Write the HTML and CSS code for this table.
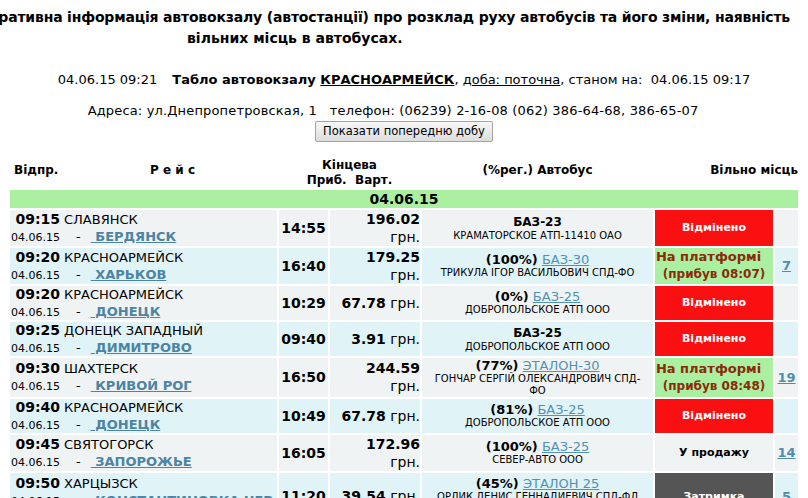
FILE: index.html
```html
<!DOCTYPE html>
<html lang="uk">
<head>
<meta charset="utf-8">
<title>Табло автовокзалу</title>
<link rel="stylesheet" href="styles.css">
</head>
<body>
<div class="title">
  <div class="t1"><span>Оперативна інформація автовокзалу (автостанції) про розклад руху автобусів та його зміни, наявність</span></div>
  <div class="t2">вільних місць в автобусах.</div>
</div>
<div class="info">04.06.15 09:21<span class="gap"></span><b>Табло автовокзалу <u>КРАСНОАРМЕЙСК</u></b>, <u>доба: поточна</u>, станом на:&nbsp; 04.06.15 09:17</div>
<div class="addr">Адреса: ул.Днепропетровская, 1&nbsp;&nbsp; телефон: (06239) 2-16-08 (062) 386-64-68, 386-65-07</div>
<div class="btnrow"><button class="btn">Показати попередню добу</button></div>

<table class="board">
  <colgroup>
    <col class="c-dep"><col class="c-arr"><col class="c-price"><col class="c-bus"><col class="c-st"><col class="c-free">
  </colgroup>
  <thead>
    <tr>
      <th class="h-dep"><div class="hd"><span class="h-otp">Відпр.</span><span class="h-reis">Р е й с</span></div></th>
      <th colspan="2" class="h-end">Кінцева<br>Приб.&nbsp; Варт.</th>
      <th>(%рег.) Автобус</th>
      <th colspan="2" class="h-free">Вільно місць</th>
    </tr>
  </thead>
  <tbody>
    <tr class="day"><td colspan="6">04.06.15</td></tr>

    <tr class="odd">
      <td class="dep"><div class="dl"><b class="t">09:15</b><span class="from">СЛАВЯНСК</span></div><div class="dl"><span class="d">04.06.15</span><span class="dash">-</span><a class="to" href="#">&nbsp;БЕРДЯНСК</a></div></td>
      <td class="arr">14:55</td>
      <td class="price"><b>196.02</b><br>грн.</td>
      <td class="bus"><div class="l1"><b class="model">БАЗ-23</b></div><div class="own">КРАМАТОРСКОЕ АТП-11410 ОАО</div></td>
      <td class="st cancel">Відмінено</td>
      <td class="free"></td>
    </tr>

    <tr class="even">
      <td class="dep"><div class="dl"><b class="t">09:20</b><span class="from">КРАСНОАРМЕЙСК</span></div><div class="dl"><span class="d">04.06.15</span><span class="dash">-</span><a class="to" href="#">&nbsp;ХАРЬКОВ</a></div></td>
      <td class="arr">16:40</td>
      <td class="price"><b>179.25</b><br>грн.</td>
      <td class="bus"><div class="l1"><b class="pct">(100%)</b> <a href="#">БАЗ-30</a></div><div class="own">ТРИКУЛА ІГОР ВАСИЛЬОВИЧ СПД-ФО</div></td>
      <td class="st plat"><span class="pl">На платформі</span><br><span class="arrived">(прибув 08:07)</span></td>
      <td class="free"><a href="#">7</a></td>
    </tr>

    <tr class="odd">
      <td class="dep"><div class="dl"><b class="t">09:20</b><span class="from">КРАСНОАРМЕЙСК</span></div><div class="dl"><span class="d">04.06.15</span><span class="dash">-</span><a class="to" href="#">&nbsp;ДОНЕЦК</a></div></td>
      <td class="arr">10:29</td>
      <td class="price nw"><b>67.78</b> грн.</td>
      <td class="bus"><div class="l1"><b class="pct">(0%)</b> <a href="#">БАЗ-25</a></div><div class="own">ДОБРОПОЛЬСКОЕ АТП ООО</div></td>
      <td class="st cancel">Відмінено</td>
      <td class="free"></td>
    </tr>

    <tr class="even">
      <td class="dep"><div class="dl"><b class="t">09:25</b><span class="from">ДОНЕЦК ЗАПАДНЫЙ</span></div><div class="dl"><span class="d">04.06.15</span><span class="dash">-</span><a class="to" href="#">&nbsp;ДИМИТРОВО</a></div></td>
      <td class="arr">09:40</td>
      <td class="price nw"><b>3.91</b> грн.</td>
      <td class="bus"><div class="l1"><b class="model">БАЗ-25</b></div><div class="own">ДОБРОПОЛЬСКОЕ АТП ООО</div></td>
      <td class="st cancel">Відмінено</td>
      <td class="free"></td>
    </tr>

    <tr class="odd">
      <td class="dep"><div class="dl"><b class="t">09:30</b><span class="from">ШАХТЕРСК</span></div><div class="dl"><span class="d">04.06.15</span><span class="dash">-</span><a class="to" href="#">&nbsp;КРИВОЙ РОГ</a></div></td>
      <td class="arr">16:50</td>
      <td class="price"><b>244.59</b><br>грн.</td>
      <td class="bus"><div class="l1"><b class="pct">(77%)</b> <a href="#">ЭТАЛОН-30</a></div><div class="own">ГОНЧАР СЕРГІЙ ОЛЕКСАНДРОВИЧ СПД-<br>ФО</div></td>
      <td class="st plat"><span class="pl">На платформі</span><br><span class="arrived">(прибув 08:48)</span></td>
      <td class="free"><a href="#">19</a></td>
    </tr>

    <tr class="even">
      <td class="dep"><div class="dl"><b class="t">09:40</b><span class="from">КРАСНОАРМЕЙСК</span></div><div class="dl"><span class="d">04.06.15</span><span class="dash">-</span><a class="to" href="#">&nbsp;ДОНЕЦК</a></div></td>
      <td class="arr">10:49</td>
      <td class="price nw"><b>67.78</b> грн.</td>
      <td class="bus"><div class="l1"><b class="pct">(81%)</b> <a href="#">БАЗ-25</a></div><div class="own">ДОБРОПОЛЬСКОЕ АТП ООО</div></td>
      <td class="st cancel">Відмінено</td>
      <td class="free"></td>
    </tr>

    <tr class="odd">
      <td class="dep"><div class="dl"><b class="t">09:45</b><span class="from">СВЯТОГОРСК</span></div><div class="dl"><span class="d">04.06.15</span><span class="dash">-</span><a class="to" href="#">&nbsp;ЗАПОРОЖЬЕ</a></div></td>
      <td class="arr">16:05</td>
      <td class="price"><b>172.96</b><br>грн.</td>
      <td class="bus"><div class="l1"><b class="pct">(100%)</b> <a href="#">БАЗ-25</a></div><div class="own">СЕВЕР-АВТО ООО</div></td>
      <td class="st sale">У продажу</td>
      <td class="free"><a href="#">14</a></td>
    </tr>

    <tr class="even tall">
      <td class="dep"><div class="dl"><b class="t">09:50</b><span class="from">ХАРЦЫЗСК</span></div><div class="dl"><span class="d">04.06.15</span><span class="dash">-</span><a class="to" href="#">&nbsp;КОНСТАНТИНОВКА ЧЕР</a></div></td>
      <td class="arr">11:20</td>
      <td class="price nw"><b>39.54</b> грн.</td>
      <td class="bus"><div class="l1"><b class="pct">(45%)</b> <a href="#">ЭТАЛОН 25</a></div><div class="own">ОРЛИК ДЕНИС ГЕННАДИЕВИЧ СПД-ФЛ</div></td>
      <td class="st delay">Затримка</td>
      <td class="free"><a href="#">5</a></td>
    </tr>
  </tbody>
</table>
</body>
</html>
```

FILE: styles.css
```css
html, body {
  margin: 0;
  padding: 0;
  background: #fff;
}

body {
  font-family: "DejaVu Sans", Verdana, sans-serif;
  color: #000;
  overflow: hidden;
}

.title {
  font-weight: bold;
  font-size: 14px;
  line-height: 21px;
  padding-top: 7px;
}

.t1 {
  display: flex;
  justify-content: flex-end;
  padding-right: 18px;
  white-space: nowrap;
  letter-spacing: -0.18px;
}

.t2 {
  padding-left: 187px;
}

.info {
  font-size: 13px;
  line-height: 16px;
  text-align: center;
  margin-top: 23px;
  white-space: nowrap;
}

.gap {
  display: inline-block;
  width: 15px;
}

.addr {
  font-size: 13px;
  line-height: 16px;
  text-align: center;
  margin-top: 15px;
  padding-right: 22px;
  white-space: nowrap;
  letter-spacing: 0.16px;
}

.btnrow {
  text-align: center;
  margin-top: 1px;
}

.btn {
  font-family: "DejaVu Sans", Verdana, sans-serif;
  font-size: 11.5px;
  height: 21px;
  padding: 0 7px;
  border: 1px solid #a3a3a3;
  border-radius: 2px;
  background: linear-gradient(#f7f7f7, #dddddd);
  color: #000;
}

.board {
  margin: 10px 0 0 8px;
  width: 792px;
  table-layout: fixed;
  border-collapse: separate;
  border-spacing: 2px;
}

.c-dep { width: 267px; }
.c-arr { width: 49px; }
.c-price { width: 90px; }
.c-bus { width: 231px; }
.c-st { width: 118px; }
.c-free { width: 23px; }

.board th,
.board td {
  padding: 0;
  vertical-align: middle;
}

.board th {
  font-size: 12px;
  line-height: 15px;
  height: 34px;
  font-weight: bold;
  text-align: center;
  white-space: nowrap;
}

.board th.h-end {
  vertical-align: bottom;
}

.hd {
  display: flex;
  align-items: center;
}

.h-otp {
  width: 58px;
  padding-left: 4px;
  text-align: left;
  box-sizing: border-box;
}

.h-reis {
  flex: 1;
  text-align: center;
}

.board th.h-free {
  text-align: right;
}

.day td {
  background: #aaf0a0;
  text-align: center;
  font-weight: bold;
  font-size: 14px;
  height: 18px;
  line-height: 18px;
}

.odd td {
  background: #eff3f3;
  height: 34px;
}

.even td {
  background: #e0f3f7;
  height: 34px;
}

.tall td {
  height: 44px;
}

.board .tall td.dep {
  vertical-align: top;
  padding-top: 2px;
}

.board .tall td.bus {
  vertical-align: top;
  padding-top: 3px;
}

.dep {
  font-size: 13px;
}

.dl {
  font-size: 13px;
  line-height: 17px;
  height: 17px;
  white-space: nowrap;
  overflow: hidden;
}

.t {
  display: inline-block;
  width: 50px;
  text-align: right;
  font-size: 14px;
  font-weight: bold;
}

.from {
  font-size: 13px;
  margin-left: 4px;
}

.d {
  display: inline-block;
  width: 50px;
  text-align: right;
  font-size: 11px;
}

.dash {
  font-size: 13px;
  margin-left: 16px;
  margin-right: 10px;
}

.to {
  font-size: 13px;
  font-weight: bold;
  color: #4b84a4;
  text-decoration: underline;
}

.arr {
  text-align: center;
  font-size: 14px;
  font-weight: bold;
}

.price {
  text-align: right;
  font-size: 14px;
  line-height: 18px;
}

.nw {
  white-space: nowrap;
}

.bus {
  text-align: center;
  font-size: 13px;
}

.l1 {
  font-size: 13px;
  line-height: 15px;
}

.model {
  font-size: 12px;
}

.bus a {
  color: #4f92b5;
  text-decoration: underline;
}

.own {
  font-size: 10px;
  line-height: 12px;
}

.st {
  text-align: center;
  font-weight: bold;
  font-size: 11px;
}

.board td.cancel {
  background: #fa1010;
  color: #fff;
}

.board td.plat {
  background: #aaf0a0;
  color: #8b2a0a;
  font-size: 13px;
  line-height: 17px;
}

.pl {
  padding-right: 11px;
}

.arrived {
  font-size: 12px;
}

.board td.delay {
  background: #555555;
  color: #fff;
}

.free {
  text-align: center;
  font-size: 13px;
}

.free a {
  font-size: 13px;
  font-weight: bold;
  color: #4f8db0;
  text-decoration: underline;
}
```
